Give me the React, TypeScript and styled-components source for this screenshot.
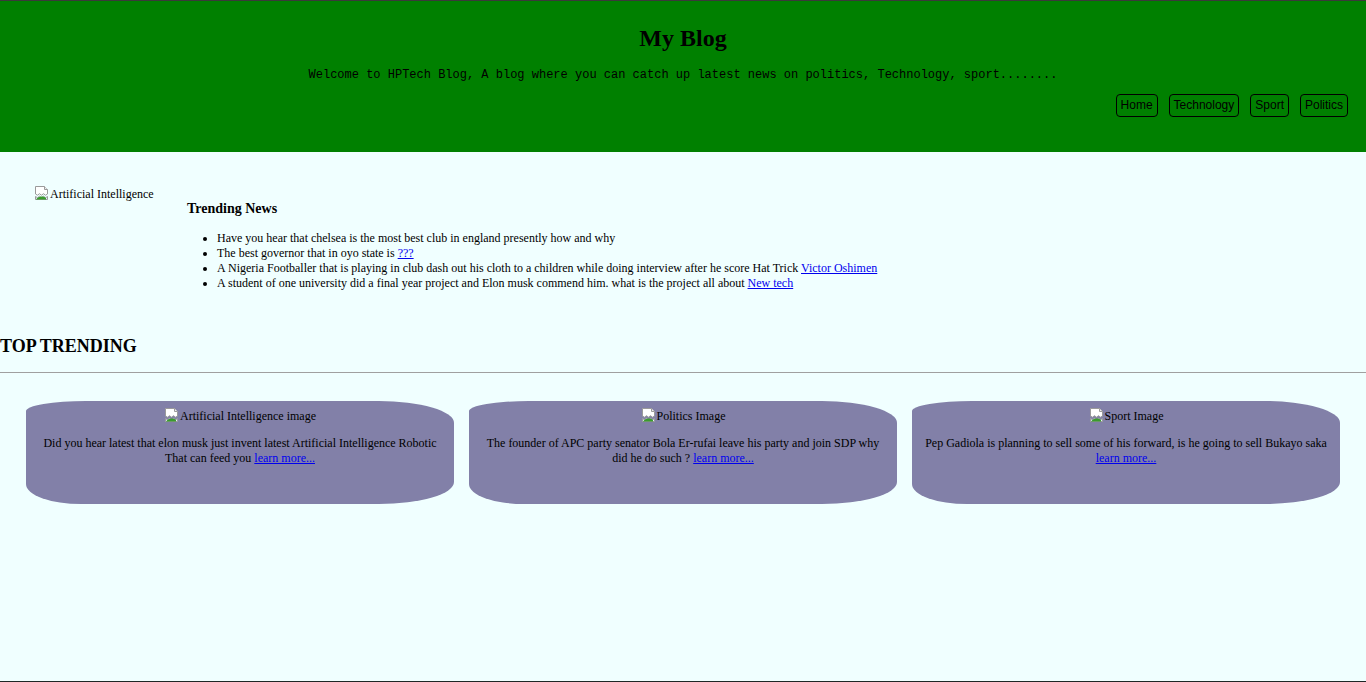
import React from "react";
import styled, { createGlobalStyle } from "styled-components";

const GlobalStyle = createGlobalStyle`
  html, body {
    margin: 0;
    padding: 0;
    background: #f0ffff;
  }
  body {
    font-family: "Liberation Serif", "Times New Roman", serif;
    font-size: 12px;
    color: #000;
  }
`;

const Page = styled.div`
  box-sizing: border-box;
  min-height: 682px;
  border-top: 1px solid #3a3a3a;
  border-bottom: 1px solid #1e2626;
  background: #f0ffff;
  overflow: hidden;
`;

const Header = styled.header`
  background: #008000;
  padding: 23px 0 35px;
  text-align: center;
`;

const Title = styled.h1`
  margin: 0;
  font-size: 24px;
  line-height: 28px;
  font-weight: bold;
`;

const Tagline = styled.p`
  margin: 16px 0 0;
  font-family: "Liberation Mono", "Courier New", monospace;
  font-size: 12px;
  line-height: 14px;
`;

const Nav = styled.nav`
  display: flex;
  justify-content: flex-end;
  gap: 11px;
  margin-top: 12px;
  padding-right: 18px;
`;

const NavButton = styled.button`
  font-family: "Liberation Sans", Arial, sans-serif;
  font-size: 12px;
  line-height: 15px;
  padding: 3px 4px;
  border: 1px solid #000;
  border-radius: 4px;
  background: transparent;
  color: #000;
  cursor: pointer;
`;

const Featured = styled.section`
  display: flex;
  align-items: flex-start;
  margin-top: 33px;
  padding-left: 34px;
`;

const Figure = styled.div`
  flex: 0 0 153px;
  line-height: 14px;
`;

const Article = styled.article``;

const Heading = styled.h3`
  margin: 16px 0 0;
  font-size: 14px;
  line-height: 16px;
  font-weight: bold;
`;

const List = styled.ul`
  margin: 14px 0 0;
  padding-left: 30px;
`;

const Item = styled.li`
  line-height: 15px;
`;

const Link = styled.a`
  color: #0000ee;
  text-decoration: underline;
`;

const SectionTitle = styled.h2`
  margin: 45px 0 0;
  font-size: 18px;
  line-height: 21px;
  font-weight: bold;
`;

const Divider = styled.hr`
  margin: 15px 0 0;
  border: none;
  border-top: 1px solid #a0a0a0;
  height: 0;
`;

const CardRow = styled.div`
  display: flex;
  gap: 15px;
  padding: 0 26px;
  margin-top: 28px;
`;

const Card = styled.div`
  box-sizing: border-box;
  flex: 1 1 0;
  height: 103px;
  padding: 6px 12px 0;
  background: rgb(130, 128, 168);
  border-radius: 60px 75px 75px 55px / 10px 22px 22px 20px;
  text-align: center;
`;

const CardImage = styled.div`
  line-height: 14px;
`;

const CardText = styled.p`
  margin: 13px 0 0;
  line-height: 15px;
`;

const AltIcon = styled.svg`
  width: 16px;
  height: 16px;
  vertical-align: -3px;
`;

const BrokenIcon = () => (
  <AltIcon viewBox="0 0 16 16">
    <path d="M1.5 1.5h9l3 3v4.5l-2 1.2-2-1.5-2 1.5-2-1.5-2 1.5-2-1.2z" fill="#fff" stroke="#9a9a9a" />
    <path d="M10.5 1.5v3h3" fill="#eee" stroke="#9a9a9a" />
    <path d="M1.5 11.5l2 1.2 2-1.5 2 1.5 2-1.5 2 1.5 2-1.2v3h-12z" fill="#e8f2ff" stroke="#9a9a9a" />
    <path d="M2 14.5c1.5-2.5 4-3.5 7-3 1 .2 2 .8 3 1.5v1.5z" fill="#3a9b2e" />
  </AltIcon>
);

const ImageAlt = ({ alt }: { alt: string }) => (
  <span>
    <BrokenIcon />
    {alt}
  </span>
);

const navItems = ["Home", "Technology", "Sport", "Politics"];

const cards = [
  {
    alt: "Artificial Intelligence image",
    text: "Did you hear latest that elon musk just invent latest Artificial Intelligence Robotic That can feed you ",
  },
  {
    alt: "Politics Image",
    text: "The founder of APC party senator Bola Er-rufai leave his party and join SDP why did he do such ? ",
  },
  {
    alt: "Sport Image",
    text: "Pep Gadiola is planning to sell some of his forward, is he going to sell Bukayo saka ",
  },
];

export default function App() {
  return (
    <Page>
      <GlobalStyle />
      <Header>
        <Title>My Blog</Title>
        <Tagline>
          Welcome to HPTech Blog, A blog where you can catch up latest news on politics, Technology, sport........
        </Tagline>
        <Nav>
          {navItems.map((n) => (
            <NavButton key={n}>{n}</NavButton>
          ))}
        </Nav>
      </Header>

      <Featured>
        <Figure>
          <ImageAlt alt="Artificial Intelligence" />
        </Figure>
        <Article>
          <Heading>Trending News</Heading>
          <List>
            <Item>Have you hear that chelsea is the most best club in england presently how and why</Item>
            <Item>
              The best governor that in oyo state is <Link href="#">???</Link>
            </Item>
            <Item>
              A Nigeria Footballer that is playing in club dash out his cloth to a children while doing interview after he score Hat Trick{" "}
              <Link href="#">Victor Oshimen</Link>
            </Item>
            <Item>
              A student of one university did a final year project and Elon musk commend him. what is the project all about{" "}
              <Link href="#">New tech</Link>
            </Item>
          </List>
        </Article>
      </Featured>

      <SectionTitle>TOP TRENDING</SectionTitle>
      <Divider />

      <CardRow>
        {cards.map((c) => (
          <Card key={c.alt}>
            <CardImage>
              <ImageAlt alt={c.alt} />
            </CardImage>
            <CardText>
              {c.text}
              <Link href="#">learn more...</Link>
            </CardText>
          </Card>
        ))}
      </CardRow>
    </Page>
  );
}
